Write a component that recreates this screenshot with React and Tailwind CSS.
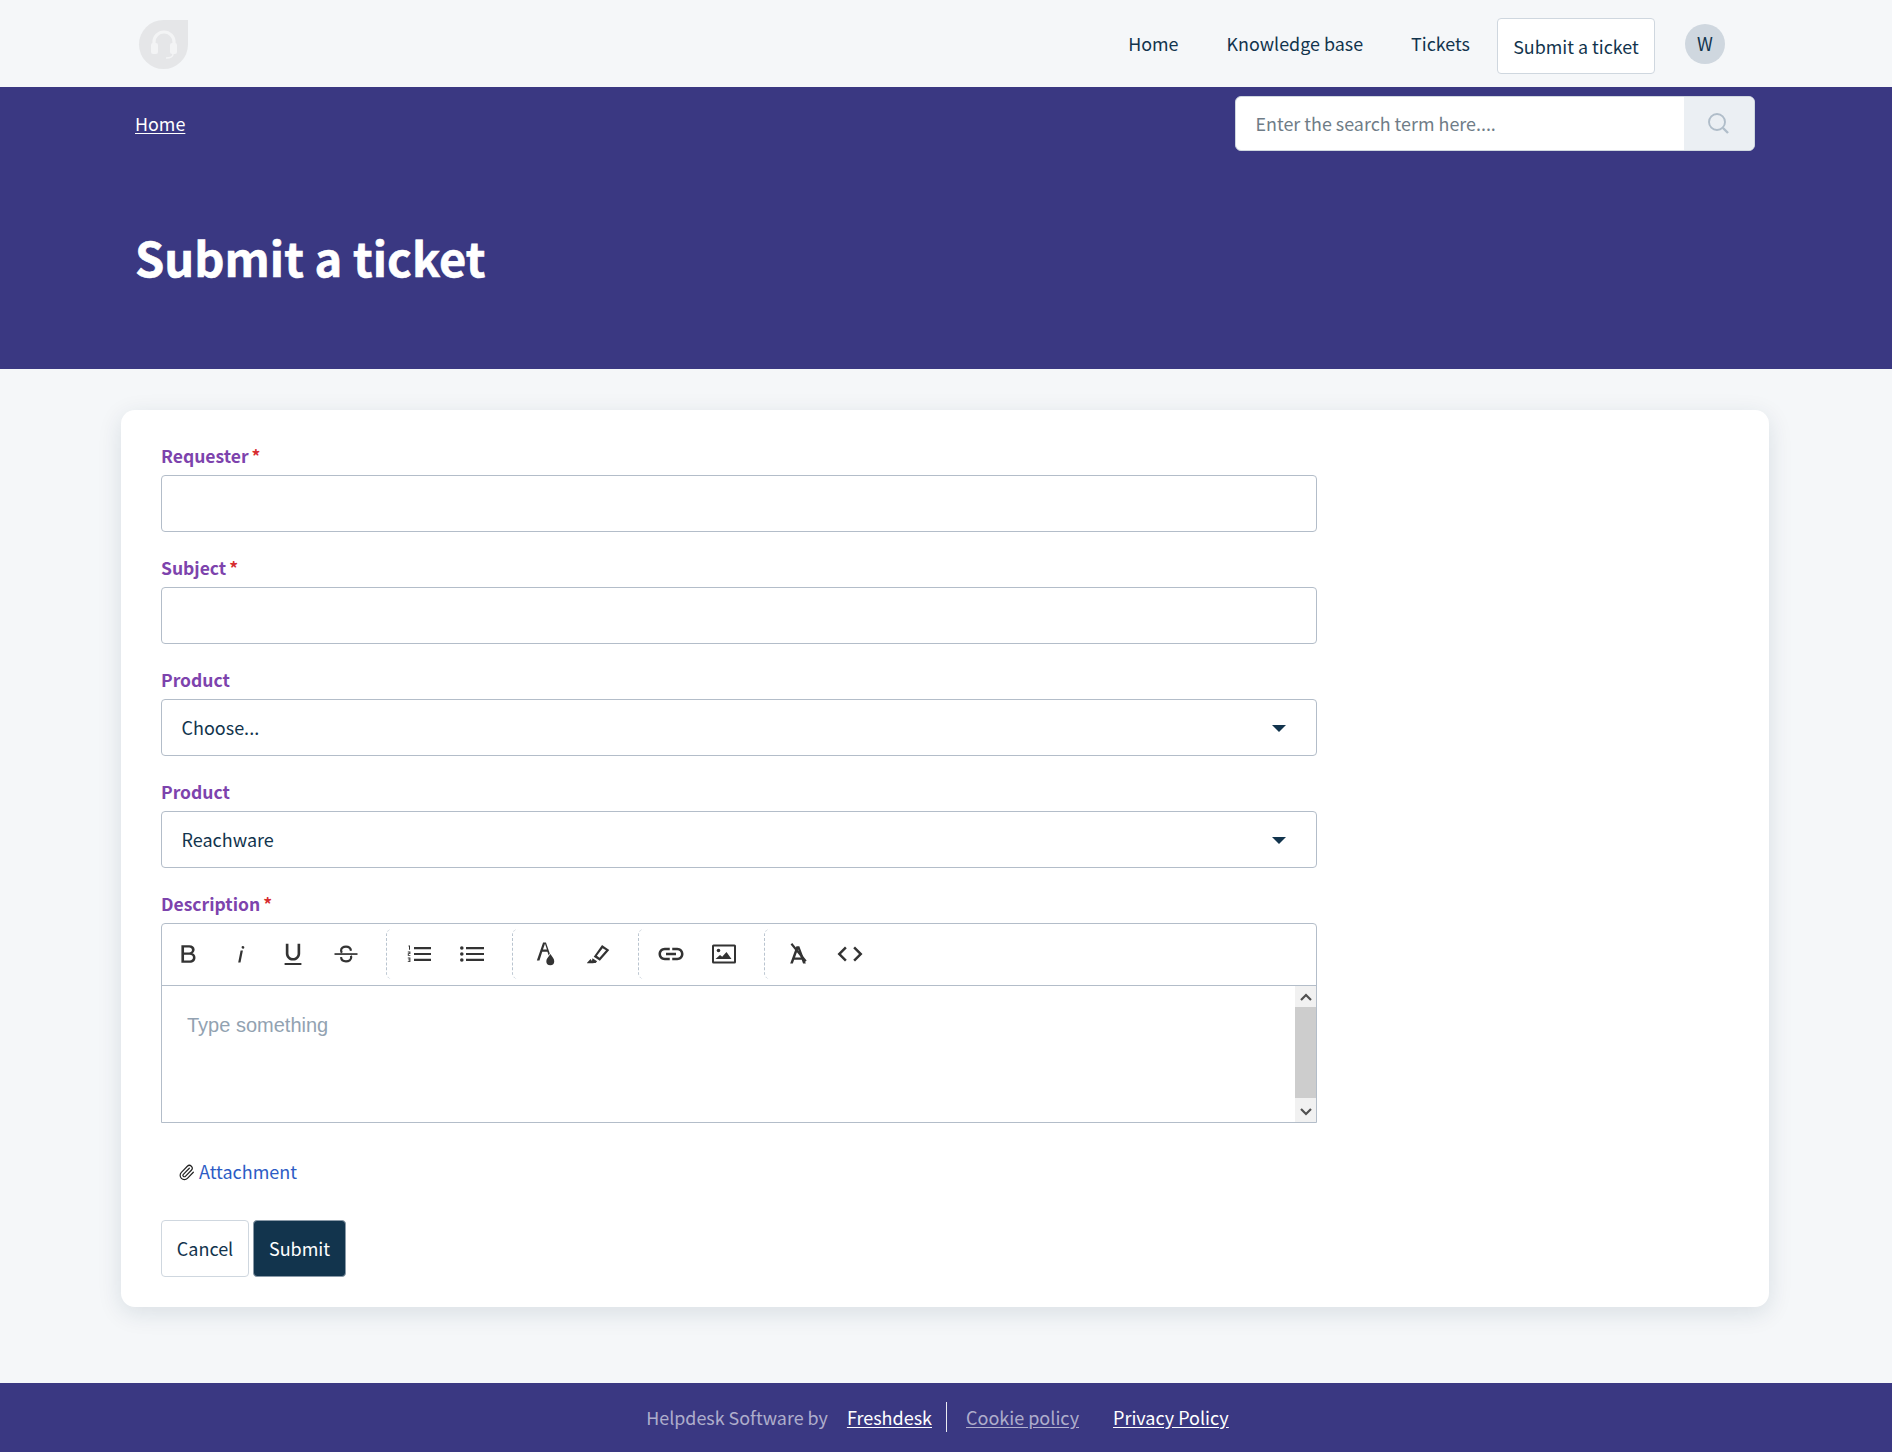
import React from 'react';
import { Paperclip } from 'lucide-react';

function ToolIcon({ children }) {
  return (
    <span className="w-[52.5px] h-6 flex items-center justify-center shrink-0">
      <svg width="26" height="26" viewBox="-1 -1 26 26" fill="#333333">{children}</svg>
    </span>
  );
}

function Sep() {
  return <span className="w-[7px] h-[50px] shrink-0 ml-[14px] border-l border-dashed border-[#b9c4cf] rounded-l-md" />;
}

function Label({ children, required }) {
  return (
    <label className="block text-[17.5px] leading-[24px] font-semibold text-[#7d43ad] mb-[7px]">
      {children}
      {required && <span className="text-[#d72d30] ml-[3px]">*</span>}
    </label>
  );
}

function Field({ label, required, children }) {
  return (
    <div className="mb-[24px]">
      <Label required={required}>{label}</Label>
      {children}
    </div>
  );
}

function TextBox() {
  return <input className="block w-full h-[57px] bg-white border border-[#b3bdc9] rounded-[4px] px-5 outline-none" />;
}

function SelectBox({ value }) {
  return (
    <div className="relative h-[57px] bg-white border border-[#b3bdc9] rounded-[4px] pl-[19.5px] flex items-center text-[18px] text-[#12344d]">
      {value}
      <span className="absolute right-[30px] top-[25px] w-0 h-0 border-x-[7px] border-x-transparent border-t-[7px] border-t-[#12344d]" />
    </div>
  );
}

export default function App() {
  return (
    <div className="bg-[#f5f7f9] text-[#12344d] font-['Noto_Sans_CJK_SC',sans-serif]">
      <header className="h-[87px] flex items-center pl-[139px] pr-[167px]">
        <div className="w-[49px] h-[49px] mt-[2px] bg-[#e5e6e8] rounded-full rounded-tr-[4px] flex items-center justify-center">
          <svg width="30" height="32" viewBox="0 0 30 32" fill="none">
            <path d="M5 17v-4a10 10 0 0 1 20 0v4" stroke="#f3f4f5" strokeWidth="3.2" />
            <rect x="2" y="14" width="7" height="11" rx="2" fill="#f3f4f5" />
            <rect x="21" y="14" width="7" height="11" rx="2" fill="#f3f4f5" />
            <path d="M24 25c0 3-3 4-7 4" stroke="#f3f4f5" strokeWidth="1.4" />
          </svg>
        </div>
        <nav className="ml-auto flex items-center text-[17.9px] leading-6">
          <a className="mr-[48px] -mt-[2px]">Home</a>
          <a className="mr-[48px] -mt-[2px]">Knowledge base</a>
          <a className="mr-[27px] -mt-[2px]">Tickets</a>
          <a className="w-[158px] h-[56px] mt-[4px] bg-white border border-[#cfd7df] rounded-[4px] flex items-center justify-center">Submit a ticket</a>
          <span className="ml-[30px] w-10 h-10 rounded-full bg-[#cfd7df] flex items-center justify-center text-[18px] pb-[1px]">W</span>
        </nav>
      </header>

      <section className="h-[282px] bg-[#3a3882] pl-[135px] pr-[137px] pt-[9px] text-white">
        <div className="flex items-start justify-between">
          <a className="mt-[15px] text-[17.9px] leading-6 underline underline-offset-2">Home</a>
          <div className="w-[520px] h-[55px] bg-white border border-[#cfd7df] rounded-[6px] flex overflow-hidden">
            <div className="flex-1 flex items-center pl-[19.5px] text-[17.9px] text-[#6f7c87]">Enter the search term here....</div>
            <div className="w-[70px] bg-[#ebeff3] flex items-center justify-center">
              <svg width="24" height="24" viewBox="0 0 24 24" fill="none" stroke="#b0bdc9" strokeWidth="1.9" className="-mt-[2px] -ml-[2px]">
                <circle cx="11" cy="11" r="8" />
                <path d="M17 17l5 5" strokeWidth="2.4" />
              </svg>
            </div>
          </div>
        </div>
        <h1 className="mt-[70px] text-[47px] leading-[72px] font-bold [-webkit-text-stroke:0.6px_white]">Submit a ticket</h1>
      </section>

      <main className="pt-[41px] pb-[76px]">
        <div className="ml-[121px] w-[1648px] h-[897px] bg-white rounded-[14px] shadow-[0_6px_24px_rgba(18,52,77,0.12)] pl-10 pt-[34px]">
          <form className="w-[1156px]">
            <Field label="Requester" required><TextBox /></Field>
            <Field label="Subject" required><TextBox /></Field>
            <Field label="Product"><SelectBox value="Choose..." /></Field>
            <Field label="Product"><SelectBox value="Reachware" /></Field>

            <Label required>Description</Label>
            <div className="h-[200px] border border-[#b3bdc9] rounded-t-[4px] bg-white flex flex-col">
              <div className="h-[62px] shrink-0 border-b border-[#b3bdc9] flex items-center pb-[2px]">
                <ToolIcon>
                  <g transform="translate(12 12) scale(1.1) translate(-12 -12)">
                    <path d="M6 4h7.2c3 0 4.8 1.600 4.800 4 0 1.600-.8 2.800-2.100 3.400 1.700.5 2.900 2 2.900 4 0 2.800-2 4.600-5.200 4.600H6V4zm2.400 2.200v4.400h4.600c1.600 0 2.600-.9 2.600-2.200s-1-2.200-2.600-2.200H8.400zm0 6.500v5.100h5.200c1.800 0 2.900-1 2.900-2.600s-1.100-2.500-2.900-2.500H8.400z" />
                  </g>
                </ToolIcon>
                <ToolIcon>
                  <path d="M11.600 8.500h2.300L11.500 20.500H9.200l2.400-12zM14 4a1.400 1.400 0 1 1-.1 2.800A1.400 1.400 0 0 1 14 4z" />
                </ToolIcon>
                <ToolIcon>
                  <g transform="translate(12 12) scale(1.2) translate(-12 -12.500)">
                    <path d="M12 18c3.300 0 6-2.700 6-6V4h-2.200v8c0 2.100-1.700 3.800-3.800 3.800S8.200 14.100 8.200 12V4H6v8c0 3.300 2.700 6 6 6zM5 20v1.700h14V20H5z" />
                  </g>
                </ToolIcon>
                <ToolIcon>
                  <path d="M.500 11.200h23v1.700H.500z" />
                  <path d="M17 8.700C16.600 6.300 14.600 4.700 12 4.700c-2.800 0-4.900 1.500-4.900 3.800 0 .9.300 1.700.9 2.300M7 15.200c.3 2.500 2.400 4.200 5 4.200 2.900 0 5.200-1.600 5.200-4.100 0-.5-.1-1-.4-1.500" fill="none" stroke="#333333" strokeWidth="2.200" />
                </ToolIcon>
                <Sep />
                <ToolIcon>
                  <path d="M7 5h17v2.200H7zM7 10.900h17v2.200H7zM7 16.800h17v2.200H7z" />
                  <path d="M1.500 3.500H3v4.200H2V4.500h-.5zM.8 9.600h2.600v2.500H1.800v.8h1.600v.9H.8v-2.500h1.600v-.8H.8zM.8 15.600h2.600V20H.8v-.8h1.600v-.9H1.200v-.7h1.200v-1.100H.8z" />
                </ToolIcon>
                <ToolIcon>
                  <circle cx="1.800" cy="6" r="1.800" />
                  <circle cx="1.800" cy="12" r="1.800" />
                  <circle cx="1.800" cy="18" r="1.800" />
                  <path d="M6 5h18v2.200H6zM6 10.900h18v2.200H6zM6 16.800h18v2.200H6z" />
                </ToolIcon>
                <Sep />
                <ToolIcon>
                  <g transform="translate(12 12) scale(1.2) translate(-12 -12.500)">
                    <path d="M10.400 3h2.400l3.200 9-.9 1.800-1.100-3.100H9.700L7.400 18H5.200l5.200-15zm-.1 5.700h3.300l-1.600-4.700-1.700 4.700z" />
                    <path d="M16.500 12.500c1.900 2.600 3.200 4.200 3.200 6a3.300 3.300 0 0 1-6.600 0c0-1.800 1.500-3.400 3.400-6z" />
                  </g>
                </ToolIcon>
                <ToolIcon>
                  <g transform="translate(12 12) scale(1.15) translate(-12 -12)">
                    <path d="M15.500 4.200l6.300 4.400-8.200 9.300-5.300-3.600 7.200-10.100zm.5 2.800l-5 6.600 2.300 1.600 5.700-6.400-3-1.800z" />
                    <path d="M7.200 15.600l4 2.800-1.200 1.500-3.400-.4-.1-.1zM2.500 19.500l3-3.200 2.700 3.700H2.500z" />
                  </g>
                </ToolIcon>
                <Sep />
                <ToolIcon>
                  <g transform="translate(12 12) scale(1.25) translate(-12 -12)">
                    <path d="M17 7h-4v2h4c1.650 0 3 1.350 3 3s-1.350 3-3 3h-4v2h4c2.760 0 5-2.240 5-5s-2.240-5-5-5zM11 15H7c-1.650 0-3-1.350-3-3s1.350-3 3-3h4V7H7c-2.760 0-5 2.240-5 5s2.240 5 5 5h4v-2zM8 11h8v2H8z" />
                  </g>
                </ToolIcon>
                <ToolIcon>
                  <path fillRule="evenodd" d="M1.500 2.500h21A1.500 1.500 0 0 1 24 4v16a1.500 1.500 0 0 1-1.500 1.500h-21A1.500 1.500 0 0 1 0 20V4a1.500 1.500 0 0 1 1.500-1.500zM2 4.500v15h20v-15H2z" />
                  <circle cx="6.500" cy="8.500" r="1.800" />
                  <path d="M3.500 17l4.500-4 2.200 1.800L14.500 10l5 7h-16z" />
                </ToolIcon>
                <Sep />
                <ToolIcon>
                  <g transform="translate(13 12) scale(1.2) translate(-12 -13)">
                    <path d="M10.700 6.500h2.400L18.500 21h-2.300l-1.100-3.200H8.800L7.700 21H5.500l5.200-14.500zm-1.200 9.400h4.900L12 9l-2.500 6.900z" />
                    <path d="M6.500 4.500L18.500 19" fill="none" stroke="#333333" strokeWidth="1.800" />
                  </g>
                </ToolIcon>
                <ToolIcon>
                  <g transform="translate(12 12) scale(1.25) translate(-12 -12)">
                    <path d="M9.400 16.600L4.800 12l4.600-4.600L8 6l-6 6 6 6 1.400-1.400zM14.600 16.600l4.600-4.600-4.600-4.600L16 6l6 6-6 6-1.400-1.400z" />
                  </g>
                </ToolIcon>
              </div>
              <div className="flex-1 relative">
                <div className="pl-[25px] pt-[25px] font-['Liberation_Sans',sans-serif] text-[20px] leading-7 text-[#92a2b1]">Type something</div>
                <div className="absolute top-0 bottom-0 right-0 w-[21px] bg-[#f1f1f1] flex flex-col">
                  <div className="h-[21px] flex items-center justify-center">
                    <svg width="12" height="8" viewBox="0 0 12 8" fill="none" stroke="#505050" strokeWidth="2.200"><path d="M1 7l5-5 5 5" /></svg>
                  </div>
                  <div className="flex-1 bg-[#cdcdcd]" />
                  <div className="h-[24px] pt-[3px] flex items-center justify-center">
                    <svg width="12" height="8" viewBox="0 0 12 8" fill="none" stroke="#505050" strokeWidth="2.200"><path d="M1 1l5 5 5-5" /></svg>
                  </div>
                </div>
              </div>
            </div>

            <div className="mt-[36px] pl-[17px] flex items-center text-[18px] leading-6 text-[#2c5cc5]">
              <Paperclip size={17} strokeWidth={1.7} color="#222222" className="mr-[4px] mt-[2px]" />
              Attachment
            </div>

            <div className="mt-[37px] flex gap-1 text-[18px]">
              <button type="button" className="w-[88px] h-[57px] bg-white border border-[#cfd7df] rounded-[4px]">Cancel</button>
              <button type="button" className="w-[93px] h-[57px] bg-[#12344d] text-white border border-[#8a9aa8] rounded-[4px]">Submit</button>
            </div>
          </form>
        </div>
      </main>

      <footer className="h-[69px] bg-[#3a3882] flex items-center justify-center text-[18px] leading-6 pr-[17px] pb-[2px]">
        <span className="text-white/60 text-[17.9px]">Helpdesk Software by</span>
        <a className="ml-[19px] text-white underline underline-offset-2">Freshdesk</a>
        <span className="ml-[14px] mr-[19px] w-px h-[30px] bg-white/90" />
        <a className="text-white/60 underline underline-offset-2">Cookie policy</a>
        <a className="ml-[34px] text-white underline underline-offset-2">Privacy Policy</a>
      </footer>
    </div>
  );
}
